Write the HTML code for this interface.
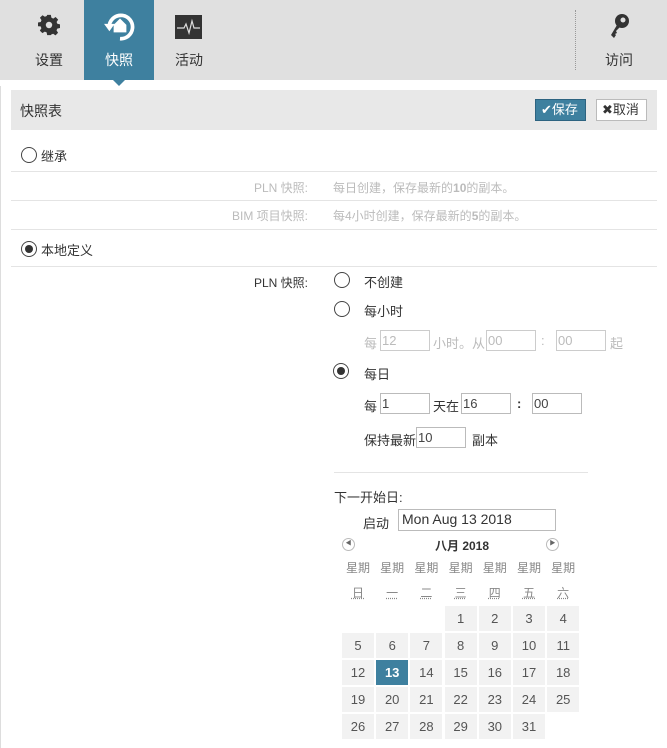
<!DOCTYPE html>
<html><head><meta charset="utf-8"><style>
*{box-sizing:border-box;margin:0;padding:0}
body{width:667px;height:748px;overflow:hidden;background:#fff;font-family:"Liberation Sans","Noto Sans CJK SC",sans-serif;font-size:13px;color:#333;position:relative}
.a{position:absolute}
.top{left:0;top:0;width:667px;height:80px;background:#e0e0e0}
.tab{top:0;width:70px;height:80px;text-align:center;font-size:14px}
.tab span{position:absolute;left:0;right:0;top:50px}
.line{left:11px;width:646px;height:1px;background:#e4e4e4}
.radio{width:16px;height:16px;border:1.3px solid #444;border-radius:50%;background:#fff}
.radio.on::after{content:"";position:absolute;left:2.5px;top:2.5px;width:8.5px;height:8.5px;border-radius:50%;background:#333}
.inp{height:21px;border:1px solid #bbb;font-size:13px;padding:2px 1px;color:#444;line-height:15px}
.inp.dis{color:#bbb;border-color:#ccc}
.gray{color:#bbb;font-size:12px}
.cell{width:32px;height:25px;background:#f2f2f2;text-align:center;line-height:25px;color:#555;font-size:13px}
.hd{width:32px;text-align:center;color:#888;font-size:12px}
</style></head><body>
<div class="a top"></div>
<div class="a tab" style="left:14px"><svg class="a" style="left:24px;top:14px" width="22" height="22" viewBox="0 0 24 24"><path fill="#333" d="M10 1h4l.6 3 2 1 2.6-1.7 2.8 2.8L20.3 8.7l.8 2 2.9.6v4l-3 .6-.8 2 1.7 2.6-2.8 2.8-2.6-1.7-2 .8L14 23h-4l-.6-3-2-.8-2.6 1.7-2.8-2.8 1.7-2.6-.8-2L0 13.3v-4l3-.6.8-2L2.1 4.1 4.9 1.3l2.6 1.7 2-.8z"/><circle cx="12" cy="12" r="3.5" fill="#e0e0e0"/></svg><span>设置</span></div>
<div class="a tab" style="left:84px;background:#3e809f;color:#fff"><svg class="a" style="left:19px;top:10px" width="34" height="34" viewBox="0 0 32 32"><path d="M6 14A11 11 0 1 1 16 27" fill="none" stroke="#fff" stroke-width="3.5"/><path d="M1 13h10l-5 7z" fill="#fff"/><path d="M16 8l6 6v7h-12v-7z" fill="#fff"/></svg><span>快照</span></div>
<div class="a" style="left:113px;top:80px;width:0;height:0;border-left:6px solid transparent;border-right:6px solid transparent;border-top:6px solid #3e809f"></div>
<div class="a tab" style="left:154px"><svg class="a" style="left:21px;top:15px" width="27" height="24" viewBox="0 0 27 24"><rect width="27" height="24" fill="#333"/><path d="M2 13h7l2-4 3 9 3-12 2 7h6" fill="none" stroke="#ddd" stroke-width="1.2"/></svg><span>活动</span></div>
<div class="a" style="left:575px;top:10px;height:60px;border-left:1px dotted #999"></div>
<div class="a tab" style="left:584px"><svg class="a" style="left:25px;top:13px" width="22" height="27" viewBox="0 0 22 27"><circle cx="13" cy="8" r="7" fill="#333"/><circle cx="14" cy="7" r="2.5" fill="#e0e0e0"/><path d="M8 12l-6 10 3 3 2-3-1-1 2-1-1-2 5-5z" fill="#333"/></svg><span>访问</span></div>
<div class="a" style="left:0;top:86px;width:1px;height:662px;background:#ddd"></div>
<div class="a" style="left:11px;top:90px;width:646px;height:40px;background:#e8e8e8"></div>
<div class="a" style="left:20px;top:101px;font-size:14px">快照表</div>
<div class="a" style="left:535px;top:99px;width:51px;height:22px;background:#3e809f;border:1px solid #2d6380;color:#fff;font-size:13px;line-height:20px;padding-left:5px">✔保存</div>
<div class="a" style="left:596px;top:99px;width:51px;height:22px;background:#fff;border:1px solid #bbb;font-size:13px;line-height:20px;padding-left:5px">✖取消</div>
<div class="a radio" style="left:21px;top:147px"></div><div class="a" style="left:41px;top:146px">继承</div>
<div class="a line" style="top:171px"></div>
<div class="a gray" style="left:200px;top:179px;width:108px;text-align:right">PLN 快照:</div><div class="a gray" style="left:333px;top:179px">每日创建，保存最新的<b>10</b>的副本。</div>
<div class="a line" style="top:200px"></div>
<div class="a gray" style="left:200px;top:207px;width:108px;text-align:right">BIM 项目快照:</div><div class="a gray" style="left:333px;top:207px">每4小时创建，保存最新的<b>5</b>的副本。</div>
<div class="a line" style="top:229px"></div>
<div class="a radio on" style="left:21px;top:241px"></div><div class="a" style="left:41px;top:240px">本地定义</div>
<div class="a line" style="top:266px"></div>
<div class="a" style="left:200px;top:274px;width:108px;text-align:right;font-size:12px">PLN 快照:</div>
<div class="a radio" style="left:334px;top:272px"></div><div class="a" style="left:364px;top:272px">不创建</div>
<div class="a radio" style="left:334px;top:301px"></div><div class="a" style="left:364px;top:301px">每小时</div>
<div class="a gray" style="left:364px;top:333px;font-size:13px">每</div><div class="a inp dis" style="left:380px;top:330px;width:50px">12</div>
<div class="a gray" style="left:433px;top:333px;font-size:13px">小时。从</div><div class="a inp dis" style="left:486px;top:330px;width:50px">00</div>
<div class="a gray" style="left:541px;top:333px;font-size:13px">:</div><div class="a inp dis" style="left:556px;top:330px;width:50px">00</div>
<div class="a gray" style="left:610px;top:333px;font-size:13px">起</div>
<div class="a radio on" style="left:333px;top:363px"></div><div class="a" style="left:364px;top:364px">每日</div>
<div class="a" style="left:364px;top:396px">每</div><div class="a inp" style="left:380px;top:393px;width:50px">1</div>
<div class="a" style="left:433px;top:396px">天在</div><div class="a inp" style="left:461px;top:393px;width:50px">16</div>
<div class="a" style="left:517px;top:396px;font-weight:bold">:</div><div class="a inp" style="left:532px;top:393px;width:50px">00</div>
<div class="a" style="left:364px;top:430px">保持最新</div><div class="a inp" style="left:416px;top:427px;width:50px">10</div>
<div class="a" style="left:472px;top:430px">副本</div>
<div class="a" style="left:334px;top:472px;width:254px;height:1px;background:#e4e4e4"></div>
<div class="a" style="left:334px;top:487px">下一开始日:</div>
<div class="a" style="left:363px;top:513px">启动</div>
<div class="a inp" style="left:398px;top:509px;width:158px;height:22px;font-size:14px;color:#333;padding-left:3px">Mon Aug 13 2018</div>
<div class="a" style="left:342px;top:538px;width:13px;height:13px;border:1px solid #bbb;border-radius:50%;font-size:6px;line-height:11px;text-align:center;color:#666">◀</div>
<div class="a" style="left:546px;top:538px;width:13px;height:13px;border:1px solid #bbb;border-radius:50%;font-size:6px;line-height:11px;text-align:center;color:#666">▶</div>
<div class="a" style="left:342px;top:537px;width:240px;text-align:center;font-weight:bold;font-size:12px">八月 2018</div>
<div id="cal"></div>
<script>
var h=["日","一","二","三","四","五","六"],s="";
for(var i=0;i<7;i++){s+='<div class="a hd" style="left:'+(342+i*34.2)+'px;top:559px">星期</div><div class="a hd" style="left:'+(342+i*34.2)+'px;top:584px;text-decoration:underline dotted">'+h[i]+'</div>';}
for(var d=1;d<=31;d++){var p=d+2,c=p%7,r=Math.floor(p/7);
s+='<div class="a cell" style="left:'+(342+c*34.2)+'px;top:'+(606+r*27)+'px;'+(d==13?'background:#3e809f;color:#fff;font-weight:bold':'')+'">'+d+'</div>';}
document.getElementById("cal").innerHTML=s;
</script>
</body></html>
